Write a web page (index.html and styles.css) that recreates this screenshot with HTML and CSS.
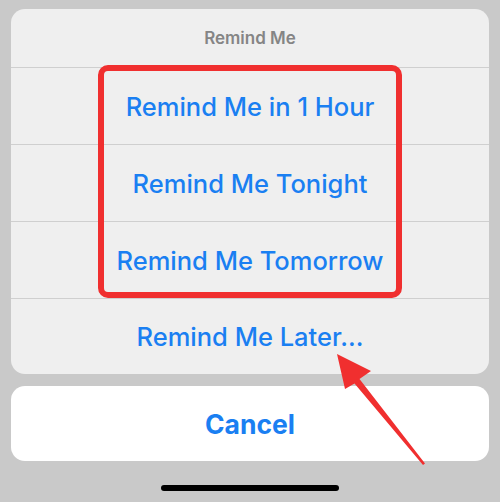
FILE: index.html
```html
<!DOCTYPE html>
<html>
<head>
<meta charset="utf-8">
<link rel="stylesheet" href="styles.css">
</head>
<body>
<div class="screen">
  <div class="sheet">
    <div class="title">Remind Me</div>
    <div class="row">Remind Me in 1 Hour</div>
    <div class="row">Remind Me Tonight</div>
    <div class="row">Remind Me Tomorrow</div>
    <div class="row last">Remind Me Later...</div>
  </div>
  <div class="cancel">Cancel</div>
  <div class="home-bar"></div>
  <div class="highlight"></div>
  <svg class="arrow" width="500" height="502" viewBox="0 0 500 502">
    <polygon points="337,354 371,371 359.5,379 425,463.5 423,465 354.5,383.5 345,389" fill="#f02f2f"/>
  </svg>
</div>
</body>
</html>
```

FILE: styles.css
```css
html, body {
  margin: 0;
  padding: 0;
  background: #c9c9c9;
}
.screen {
  position: relative;
  width: 500px;
  height: 502px;
  overflow: hidden;
  padding: 9px 11px 0;
  box-sizing: border-box;
  display: flex;
  flex-direction: column;
  font-family: Inter, "Noto Sans", sans-serif;
}
.sheet {
  background: #efefef;
  border-radius: 14px;
  display: flex;
  flex-direction: column;
}
.title {
  height: 58px;
  display: flex;
  align-items: center;
  justify-content: center;
  color: #858585;
  font-size: 17px;
  font-weight: 600;
}
.row {
  height: 76px;
  border-top: 1px solid #cfcfcf;
  display: flex;
  align-items: center;
  justify-content: center;
  color: #1a7ff2;
  font-size: 25.5px;
  font-weight: 500;
}
.row.last {
  height: 75px;
}
.cancel {
  margin-top: 12px;
  height: 75px;
  background: #ffffff;
  border-radius: 14px;
  display: flex;
  align-items: center;
  justify-content: center;
  color: #1a7ff2;
  font-size: 26.5px;
  font-weight: 700;
}
.home-bar {
  margin: 24px auto 0;
  width: 178px;
  height: 6px;
  border-radius: 3px;
  background: #000;
}
.highlight {
  position: absolute;
  left: 98px;
  top: 65px;
  width: 304px;
  height: 233px;
  box-sizing: border-box;
  border: 6px solid #f02f2f;
  border-radius: 10px;
}
.arrow {
  position: absolute;
  left: 0;
  top: 0;
}
```
